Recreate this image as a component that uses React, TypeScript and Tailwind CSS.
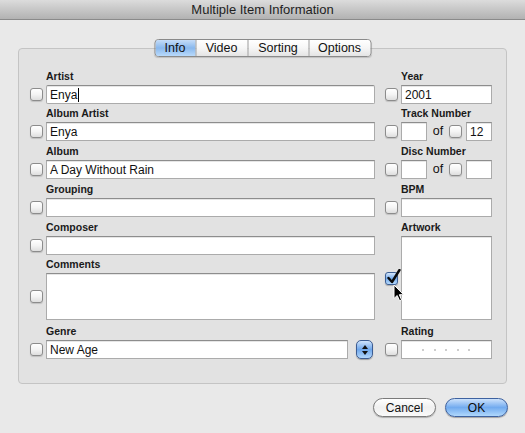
import React from "react";

function Check({ checked }: { checked?: boolean }) {
  if (checked) {
    return (
      <div className="relative w-[13px] h-[13px] shrink-0 rounded-[3px] border border-[#3d5f94] bg-linear-to-b from-[#d6e7fb] via-[#76aceb] to-[#b4d8fb] shadow-[0_1px_1px_rgba(0,0,0,0.25)]">
        <svg className="absolute left-[1px] top-[-4px]" width="14" height="15" viewBox="0 0 14 15">
          <path d="M1.5 9 L5 13 L12.5 1" fill="none" stroke="#0a0a0a" strokeWidth="2.4" strokeLinecap="round" strokeLinejoin="round" />
        </svg>
      </div>
    );
  }
  return (
    <div className="w-[13px] h-[13px] shrink-0 rounded-[3px] border border-[#8c8c8c] bg-linear-to-b from-white via-[#f4f4f4] to-[#dedede] shadow-[0_1px_1px_rgba(0,0,0,0.15)]" />
  );
}

function Label({ children, h }: { children?: React.ReactNode; h: string }) {
  return (
    <div className={`${h} flex items-end pb-[3px] pl-[16px] text-[10.5px] leading-[12px] font-bold text-[#1a1a1a]`}>
      {children}
    </div>
  );
}

function Field({ children, className = "" }: { children?: React.ReactNode; className?: string }) {
  return (
    <div
      className={`h-[19px] bg-white border border-[#ababab] border-t-[#8d8d8d] flex items-center pl-[3px] text-[12px] text-[#111] shadow-[inset_0_1px_0_#e6e6e6] ${className}`}
    >
      {children}
    </div>
  );
}

function Segment({ label, w, selected, first }: { label: string; w: string; selected?: boolean; first?: boolean }) {
  return (
    <div
      className={`${w} h-full flex items-center justify-center text-[12.5px] text-[#111] ${
        first ? "" : "border-l border-[#a5a5a5]"
      } ${
        selected
          ? "bg-linear-to-b from-[#c6ddf8] via-[#89b8ed] to-[#b9dafb] text-[#0c1a33]"
          : "bg-linear-to-b from-white via-[#f6f6f6] to-[#e4e4e4]"
      }`}
    >
      {label}
    </div>
  );
}

export default function App() {
  return (
    <div className="w-[525px] h-[433px] bg-[#e9e9e9] flex flex-col font-['Liberation_Sans',Arial,sans-serif] text-[#111] overflow-hidden">
      {/* Title bar */}
      <div className="h-[20px] shrink-0 bg-linear-to-b from-[#dcdcdc] to-[#b2b2b2] border-b border-[#8a8a8a] flex items-center justify-center text-[13px] text-[#1e1e1e]">
        Multiple Item Information
      </div>

      {/* Group box */}
      <div className="relative mt-[28px] ml-[18px] w-[489px] border border-[#c4c4c4] rounded-[4px] bg-[#e2e2e2] pt-[17px] pb-[24px] pl-[11px] flex">
        {/* Tabs */}
        <div className="absolute top-[-10px] left-1/2 -translate-x-1/2 h-[18px] flex rounded-[4px] border border-[#8a8a8a] overflow-hidden shadow-[0_1px_1px_rgba(0,0,0,0.15)]">
          <Segment label="Info" w="w-[40px]" selected first />
          <Segment label="Video" w="w-[52px]" />
          <Segment label="Sorting" w="w-[61px]" />
          <Segment label="Options" w="w-[62px]" />
        </div>

        {/* Left column */}
        <div className="flex flex-col w-[345px]">
          <Label h="h-[19px]">Artist</Label>
          <div className="flex items-center gap-[3px]">
            <Check />
            <Field className="w-[329px] border-[#6b95d0] border-t-[#6b95d0] shadow-[0_0_0_1px_#8db3e6,0_0_1px_3px_#a7c6ee] rounded-[2px]">
              <span>Enya</span>
              <span className="ml-[1px] w-[1px] h-[14px] bg-black" />
            </Field>
          </div>
          <Label h="h-[18px]">Album Artist</Label>
          <div className="flex items-center gap-[3px]">
            <Check />
            <Field className="w-[329px]">Enya</Field>
          </div>
          <Label h="h-[19px]">Album</Label>
          <div className="flex items-center gap-[3px]">
            <Check />
            <Field className="w-[329px]">A Day Without Rain</Field>
          </div>
          <Label h="h-[19px]">Grouping</Label>
          <div className="flex items-center gap-[3px]">
            <Check />
            <Field className="w-[329px]" />
          </div>
          <Label h="h-[19px]">Composer</Label>
          <div className="flex items-center gap-[3px]">
            <Check />
            <Field className="w-[329px]" />
          </div>
          <Label h="h-[18px]">Comments</Label>
          <div className="flex items-center gap-[3px]">
            <Check />
            <div className="w-[329px] h-[47px] bg-white border border-[#ababab] border-t-[#8d8d8d] shadow-[inset_0_1px_0_#e6e6e6]" />
          </div>
          <Label h="h-[20px]">Genre</Label>
          <div className="flex items-center">
            <Check />
            <Field className="ml-[3px] w-[302px]">New Age</Field>
            <div className="ml-[8px] w-[17px] h-[19px] rounded-[5px] border border-[#3c5c92] bg-linear-to-b from-[#cfe3fb] via-[#6ea6ea] to-[#b3d7fb] shadow-[0_1px_1px_rgba(0,0,0,0.3)] flex flex-col items-center justify-center gap-[2px]">
              <svg width="6" height="4" viewBox="0 0 6 4"><path d="M0 4 L3 0 L6 4 Z" fill="#111" /></svg>
              <svg width="6" height="4" viewBox="0 0 6 4"><path d="M0 0 L6 0 L3 4 Z" fill="#111" /></svg>
            </div>
          </div>
        </div>

        {/* Right column */}
        <div className="flex flex-col ml-[10px]">
          <Label h="h-[19px]">Year</Label>
          <div className="flex items-center gap-[3px]">
            <Check />
            <Field className="w-[91px]">2001</Field>
          </div>
          <Label h="h-[18px]">Track Number</Label>
          <div className="flex items-center">
            <Check />
            <Field className="ml-[3px] w-[26px]" />
            <span className="w-[22px] text-center text-[12.5px]">of</span>
            <Check />
            <Field className="ml-[4px] w-[26px]">12</Field>
          </div>
          <Label h="h-[19px]">Disc Number</Label>
          <div className="flex items-center">
            <Check />
            <Field className="ml-[3px] w-[26px]" />
            <span className="w-[22px] text-center text-[12.5px]">of</span>
            <Check />
            <Field className="ml-[4px] w-[26px]" />
          </div>
          <Label h="h-[19px]">BPM</Label>
          <div className="flex items-center gap-[3px]">
            <Check />
            <Field className="w-[91px]" />
          </div>
          <Label h="h-[19px]">Artwork</Label>
          <div className="flex items-center gap-[3px]">
            <div className="relative">
              <Check checked />
              <svg className="absolute left-[8px] top-[12px]" width="12" height="18" viewBox="0 0 12 18">
                <path d="M1 1 L1 14.5 L4.2 11.5 L6.6 16.8 L8.6 15.9 L6.3 10.7 L10.6 10.7 Z" fill="#000" stroke="#fff" strokeWidth="1" strokeLinejoin="round" />
              </svg>
            </div>
            <div className="w-[91px] h-[84px] bg-white border border-[#ababab] border-t-[#8d8d8d] shadow-[inset_0_1px_0_#e6e6e6]" />
          </div>
          <Label h="h-[20px]">Rating</Label>
          <div className="flex items-center gap-[3px]">
            <Check />
            <Field className="w-[91px] pl-[20px] gap-[9.5px]">
              <span className="w-[2px] h-[2px] rounded-full bg-[#bdbdbd]" />
              <span className="w-[2px] h-[2px] rounded-full bg-[#bdbdbd]" />
              <span className="w-[2px] h-[2px] rounded-full bg-[#bdbdbd]" />
              <span className="w-[2px] h-[2px] rounded-full bg-[#bdbdbd]" />
              <span className="w-[2px] h-[2px] rounded-full bg-[#bdbdbd]" />
            </Field>
          </div>
        </div>
      </div>

      {/* Buttons */}
      <div className="mt-[14px] flex justify-end gap-[9px] pr-[17px]">
        <div className="w-[63px] h-[19px] rounded-full border border-[#7a7a7a] bg-linear-to-b from-white via-[#f0f0f0] to-[#fafafa] shadow-[0_1px_1px_rgba(0,0,0,0.25)] flex items-center justify-center text-[12px] text-[#111]">
          Cancel
        </div>
        <div className="w-[63px] h-[19px] rounded-full border border-[#3e62a0] bg-linear-to-b from-[#cde2fb] via-[#72abef] to-[#b0d8fc] shadow-[0_1px_1px_rgba(0,0,0,0.3)] flex items-center justify-center text-[12px] text-[#0a0a0a]">
          OK
        </div>
      </div>
    </div>
  );
}
